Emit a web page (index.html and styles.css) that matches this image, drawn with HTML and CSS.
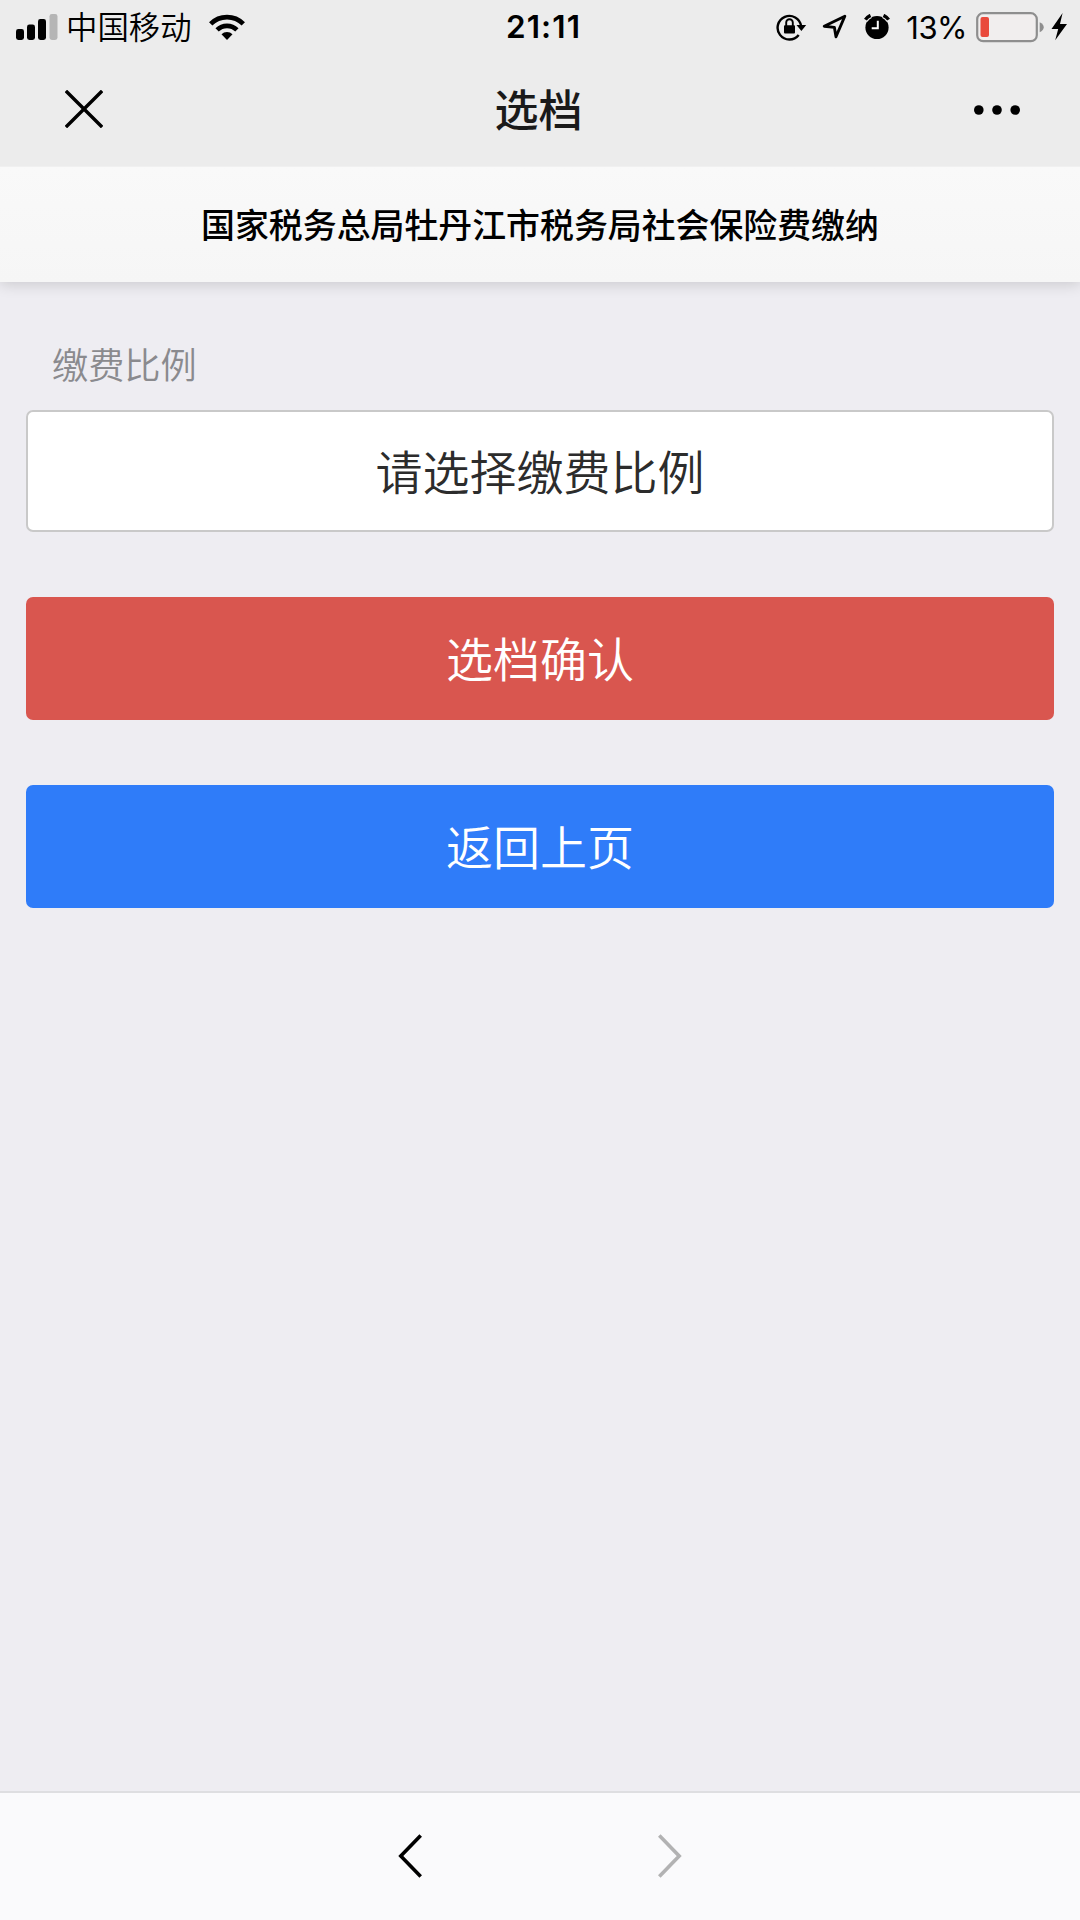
FILE: index.html
```html
<!DOCTYPE html>
<html lang="zh-CN">
<head>
<meta charset="utf-8">
<title>选档</title>
<link rel="stylesheet" href="styles.css">
</head>
<body>
<div class="screen">
  <div class="status">
    <div class="status-left">
      <svg class="signal" width="42" height="27" viewBox="0 0 42 27">
        <rect x="0" y="15" width="8" height="11" rx="2.4"/>
        <rect x="11" y="10.5" width="8" height="15.500" rx="2.400"/>
        <rect x="22" y="5" width="8" height="21" rx="2.4"/>
        <rect x="33.500" y="0" width="8" height="26" rx="2.4" fill="#b5b5b5"/>
      </svg>
      <span class="carrier">中国移动</span>
      <svg class="wifi" width="36" height="27" viewBox="0 0 36 27">
        <path d="M1.700 9.800a23 23 0 0 1 32.600 0M8.100 15.900a14 14 0 0 1 19.800 0" fill="none" stroke="#000" stroke-width="4.700"/>
        <path d="M18 26l-5.500-5.700a7.700 7.700 0 0 1 11 0z"/>
      </svg>
    </div>
    <div class="time">21:11</div>
    <div class="status-right">
      <svg class="lock" width="31" height="28" viewBox="0 0 31 28">
        <path d="M22.700 22A11.800 11.800 0 1 1 25.100 13" fill="none" stroke="#000" stroke-width="2.400"/>
        <path d="M20.500 12h9.700l-4.800 6z"/>
        <rect x="8" y="12.200" width="11" height="8.300" rx="1"/>
        <path d="M10.200 13V9.600a3.300 3.300 0 0 1 6.600 0V13" fill="none" stroke="#000" stroke-width="1.900"/>
      </svg>
      <svg class="locate" width="26" height="26" viewBox="0 0 26 26">
        <path d="M2.200 12.200L22.800 2.200 14 22.800l-1.600-9.400z" fill="none" stroke="#000" stroke-width="2.900" stroke-linejoin="round"/>
      </svg>
      <svg class="alarm" width="26" height="27" viewBox="0 0 26 27">
        <circle cx="13" cy="13.500" r="11.600"/>
        <path d="M.9 6.200A12 12 0 0 1 6.500 1.200M25.100 6.200A12 12 0 0 0 19.500 1.200" fill="none" stroke="#ececec" stroke-width="6"/>
        <path d="M1.400 5.600A12 12 0 0 1 6.500 1.400M24.600 5.600A12 12 0 0 0 19.500 1.400" fill="none" stroke="#000" stroke-width="3.400"/>
        <path d="M13.800 6.800v7.500H7.700" fill="none" stroke="#fff" stroke-width="2"/>
      </svg>
      <span class="percent">13%</span>
      <svg class="battery" width="69" height="31" viewBox="0 0 69 31">
        <rect x="1.200" y="1.200" width="59.600" height="28" rx="6" fill="#f1eeee" stroke="#8e8e8e" stroke-width="2.200"/>
        <rect x="4.500" y="5" width="8.500" height="20" rx="2" fill="#e9493c"/>
        <path d="M63.700 10.300q4 2 4 5t-4 5z" fill="#8e8e8e"/>
      </svg>
      <svg class="bolt" width="17" height="28" viewBox="0 0 17 28">
        <path d="M11.600 0L.5 16h6.700L4.200 27.300 16 11H9z"/>
      </svg>
    </div>
  </div>
  <div class="nav">
    <svg class="close" width="38" height="38" viewBox="0 0 38 38"><path d="M.9.9l36.200 36.200M37.100.9L.9 37.100" stroke="#000" stroke-width="3.400"/></svg>
    <div class="nav-title">选档</div>
    <svg class="more" width="46" height="10" viewBox="0 0 46 10"><circle cx="4.800" cy="5" r="4.800"/><circle cx="23" cy="5" r="4.800"/><circle cx="41.200" cy="5" r="4.800"/></svg>
  </div>
  <header class="header">国家税务总局牡丹江市税务局社会保险费缴纳</header>
  <main class="content">
    <div class="label">缴费比例</div>
    <button class="btn select">请选择缴费比例</button>
    <button class="btn confirm">选档确认</button>
    <button class="btn back">返回上页</button>
  </main>
  <footer class="toolbar">
    <svg width="26" height="46" viewBox="0 0 26 46"><path d="M22.700 2.500L2.800 23l19.900 20.500" fill="none" stroke="#000" stroke-width="3.600"/></svg>
    <svg width="26" height="46" viewBox="0 0 26 46"><path d="M3.300 2.500L23.200 23 3.300 43.500" fill="none" stroke="#b2b2b3" stroke-width="3.600"/></svg>
  </footer>
</div>
</body>
</html>
```
FILE: styles.css
```css
* { box-sizing: border-box; }
body { margin: 0; font-family: "Noto Sans CJK SC", sans-serif; color: #000; }
svg { display: block; flex: none; }
.screen { height: 1920px; display: flex; flex-direction: column; background: #eeedf2; overflow: hidden; }
.status { height: 54px; flex: none; background: #ececec; display: grid; grid-template-columns: 1fr auto 1fr; align-items: center; padding: 0 12px 2px 17px; }
.status-left, .status-right { display: flex; align-items: center; }
.status-left { margin-left: -1px; }
.status-right { justify-content: flex-end; }
.carrier { font-size: 31.400px; line-height: 50px; font-weight: 350; margin: -2px 0 0 8px; }
.wifi { margin-left: 17px; }
.time { font: 600 31.500px/52px Inter, sans-serif; letter-spacing: 1.1px; padding-left: 2px; }
.percent { font: 400 31px/52px Inter, sans-serif; letter-spacing: -0.5px; margin: 2px 0 0 16px; }
.locate { margin-left: 15px; }
.alarm { margin-left: 16px; }
.battery { margin-left: 9px; }
.bolt { margin-left: 6px; }
.nav { position: relative; z-index: 1; height: 112px; flex: none; background: #ececec; display: flex; align-items: center; justify-content: space-between; padding: 0 60px 2px 65px; }
.nav-title { font-size: 44px; line-height: 60px; font-weight: 500; color: #1a1a1a; padding-bottom: 2px; }
.more { margin-top: 1px; }
.header { height: 116px; flex: none; background: linear-gradient(#f9f9f9, #f6f6f6); border-top: 1px solid #f0f0f0; box-shadow: 0 2px 14px rgba(0,0,0,.16); display: flex; align-items: center; justify-content: center; font-size: 33.900px; font-weight: 500; padding-bottom: 2px; }
.content { flex: 1; padding: 56px 26px 0; display: flex; flex-direction: column; }
.label { font-size: 36.200px; line-height: 50px; height: 72px; padding-left: 26px; font-weight: 350; color: #8a8a8e; }
.btn { height: 123px; flex: none; border: 0; border-radius: 7px; padding: 0 0 4px; margin: 0 0 65px; font-family: inherit; font-size: 47px; font-weight: 350; color: #fff; }
.select { height: 122px; background: #fff; border: 2px solid #c9c9c9; color: #2c2c2c; }
.confirm { background: #d9564f; }
.back { background: #2f7cf9; }
.toolbar { height: 129px; flex: none; background: #fafafc; border-top: 2px solid #dedee1; display: flex; align-items: center; justify-content: center; gap: 232px; padding-bottom: 2px; }
```
